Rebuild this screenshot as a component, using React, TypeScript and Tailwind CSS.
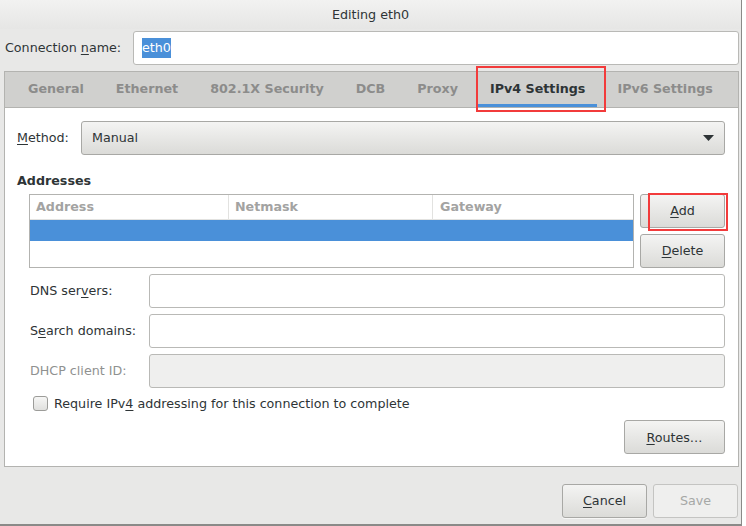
import React from "react";

// GTK "Editing eth0" connection editor, IPv4 tab.

const TABS = ["General", "Ethernet", "802.1X Security", "DCB", "Proxy", "IPv4 Settings", "IPv6 Settings"];

function Btn({ children, className = "", disabled = false }: { children: React.ReactNode; className?: string; disabled?: boolean }) {
  return (
    <div
      className={`flex items-center justify-center rounded-[3px] border ${
        disabled
          ? "border-[#c4c4c2] bg-[#efefee] text-[#a6a8a6]"
          : "border-[#a8a8a5] bg-gradient-to-b from-[#f4f4f3] to-[#dbdbd8] text-[#2e3436] shadow-[0_1px_0_rgba(255,255,255,0.6)]"
      } ${className}`}
    >
      {children}
    </div>
  );
}

function Field({ disabled = false }: { disabled?: boolean }) {
  return (
    <div
      className={`h-[34px] flex-1 rounded-[3px] border border-[#b9b9b6] ${disabled ? "bg-[#efefee]" : "bg-white"}`}
    />
  );
}

function U({ children }: { children: React.ReactNode }) {
  return <span className="underline underline-offset-2">{children}</span>;
}

export default function App() {
  return (
    <div className="h-[526px] w-[746px] bg-white font-['DejaVu_Sans',sans-serif] text-[12.7px] text-[#2e3436]">
      <div className="flex h-[526px] w-[742px] flex-col border-b-2 border-r border-[#8a8a88] bg-[#e8e8e7]">
        <div className="flex h-[29px] shrink-0 items-center justify-center bg-gradient-to-b from-[#f2f2f1] to-[#e6e6e5]">
          Editing eth0
        </div>

        <div className="mt-[2px] flex h-[34px] items-center pl-[5px] pr-[2px]">
          <span className="w-[128px]">
            Connection <U>n</U>ame:
          </span>
          <div className="flex h-[34px] flex-1 items-center rounded-[3px] border border-[#b9b9b6] bg-white pl-[8px]">
            <span className="bg-[#4a90d9] text-white">eth0</span>
          </div>
        </div>

        <div className="ml-[4px] mr-[2px] mt-[6px] flex h-[396px] flex-col border border-[#b3b3b0]">
          <div className="relative flex h-[36px] shrink-0 border-b border-[#b3b3b0] bg-[#d0d0ce] pl-[7px]">
            {TABS.map((t) => {
              const active = t === "IPv4 Settings";
              return (
                <div
                  key={t}
                  className={`mx-[4px] flex items-center whitespace-nowrap px-[12px] font-bold ${
                    active ? "border-b-[3px] border-[#4a90d9] pt-[1px] text-[#2e3436]" : "pb-[2px] text-[#8c8c8b]"
                  }`}
                >
                  {t}
                </div>
              );
            })}
            <div className="pointer-events-none absolute left-[471px] top-[-6px] h-[46px] w-[130px] border-2 border-[#f23b3b]" />
          </div>

          <div className="flex flex-1 flex-col bg-white pl-[12px] pr-[13px] pt-[13px]">
            <div className="flex h-[34px] items-center">
              <span className="w-[64px]">
                <U>M</U>ethod:
              </span>
              <div className="flex h-[34px] flex-1 items-center justify-between rounded-[3px] border border-[#a8a8a5] bg-gradient-to-b from-[#f4f4f3] to-[#dbdbd8] pl-[10px] pr-[10px]">
                <span>Manual</span>
                <svg width="11" height="6" viewBox="0 0 11 6">
                  <path d="M0 0 H11 L5.5 6 Z" fill="#2e3436" />
                </svg>
              </div>
            </div>

            <div className="mt-[18px] font-bold leading-[16px]">Addresses</div>

            <div className="mt-[5px] flex gap-[6px] pl-[12px]">
              <div className="flex h-[74px] flex-1 flex-col border border-[#b3b3b0]">
                <div className="flex h-[25px] border-b border-[#e2e2e0] font-bold text-[#a3a3a2]">
                  <div className="w-[199px] border-r border-[#e2e2e0] pl-[6px] pt-[2px]">Address</div>
                  <div className="w-[204px] border-r border-[#e2e2e0] pl-[6px] pt-[2px]">Netmask</div>
                  <div className="flex-1 pl-[7px] pt-[2px]">Gateway</div>
                </div>
                <div className="h-[21px] bg-[#4a90d9]" />
              </div>
              <div className="relative flex w-[85px] flex-col gap-[6px]">
                <Btn className="h-[34px]">
                  <span>
                    <U>A</U>dd
                  </span>
                </Btn>
                <Btn className="h-[34px]">
                  <span>
                    <U>D</U>elete
                  </span>
                </Btn>
                <div className="pointer-events-none absolute left-[8px] top-[-1px] h-[38px] w-[80px] border-2 border-[#f23b3b]" />
              </div>
            </div>

            <div className="mt-[6px] flex flex-col gap-[6px] pl-[13px]">
              <div className="flex items-center">
                <span className="w-[119px]">
                  DNS ser<U>v</U>ers:
                </span>
                <Field />
              </div>
              <div className="flex items-center">
                <span className="w-[119px]">
                  S<U>e</U>arch domains:
                </span>
                <Field />
              </div>
              <div className="flex items-center">
                <span className="w-[119px] text-[#8f9190]">DHCP client ID:</span>
                <Field disabled />
              </div>
            </div>

            <div className="mt-[6px] flex items-center pl-[16px]">
              <div className="h-[15px] w-[15px] rounded-[3px] border border-[#9c9c99] bg-gradient-to-b from-[#f6f6f5] to-[#e0e0de]" />
              <span className="ml-[6px]">
                Require IPv<U>4</U> addressing for this connection to complete
              </span>
            </div>

            <div className="mt-[7px] flex justify-end">
              <Btn className="h-[34px] w-[101px]">
                <span>
                  <U>R</U>outes…
                </span>
              </Btn>
            </div>
          </div>
        </div>

        <div className="mt-[17px] flex justify-end gap-[6px] pr-[3px]">
          <Btn className="h-[34px] w-[85px]">
            <span>
              <U>C</U>ancel
            </span>
          </Btn>
          <Btn className="h-[34px] w-[85px]" disabled>
            Save
          </Btn>
        </div>
      </div>
    </div>
  );
}
